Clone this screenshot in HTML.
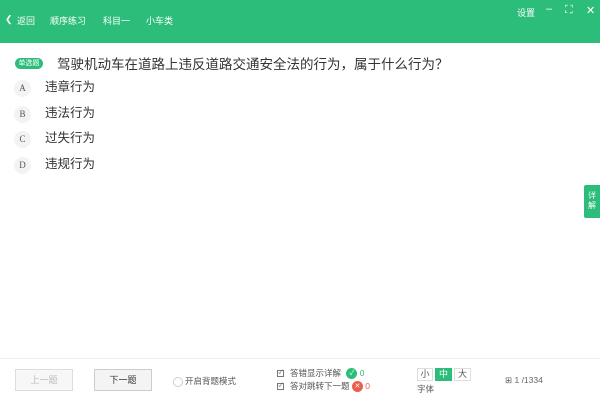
<!DOCTYPE html>
<html><head><meta charset="utf-8"><style>
*{margin:0;padding:0;box-sizing:border-box}
body{width:600px;height:400px;background:#fff;font-family:"Liberation Sans","Noto Sans CJK SC",sans-serif;position:relative;overflow:hidden;color:#333}
.hd{position:absolute;left:0;top:0;width:600px;height:43px;background:#2dbd7a;color:#fff;font-size:9px}
.hd span{position:absolute;top:14px}
.q{position:absolute;left:15px;top:53px;font-size:13.5px;color:#333;white-space:nowrap}
.tag{position:absolute;left:15px;top:58px;width:28px;height:11px;background:#2dbd7a;border-radius:6px;color:#fff;font-size:7px;text-align:center;line-height:11px}
.opt{position:absolute;left:14px;font-size:12.5px;color:#333}
.opt i{position:absolute;left:0;top:0;width:17px;height:17px;border-radius:50%;background:#f3f3f3;font-style:normal;font-size:9px;text-align:center;line-height:17px;color:#555;font-family:"Liberation Serif",serif}
.opt b{position:absolute;left:31px;top:-1px;font-weight:normal;white-space:nowrap;line-height:17px}
.ft{position:absolute;left:0;top:358px;width:600px;height:42px;border-top:1px solid #eee;background:#fff}
.btn{position:absolute;top:369px;height:22px;width:58px;border:1px solid #ccc;background:#f4f4f4;font-size:9px;text-align:center;line-height:20px}
.sm{position:absolute;font-size:8.5px;color:#555;white-space:nowrap}
.cb{display:inline-block;width:7px;height:7px;border:1px solid #777;vertical-align:middle;margin-right:6px;font-size:6px;line-height:5px;text-align:center}
</style></head><body>
<div class="hd">
<span style="left:5px">&#10094;</span><span style="left:17px">返回</span>
<span style="left:50px">顺序练习</span><span style="left:103px">科目一</span><span style="left:146px">小车类</span>
<span style="left:517px;top:6px">设置</span><span style="left:546px;top:3px;font-size:11px">–</span>
<span style="left:565px;top:4px;font-size:11px">⛶</span><span style="left:586px;top:4px;font-size:11px">✕</span>
</div>
<div class="tag">单选题</div>
<div class="q" style="left:57px">驾驶机动车在道路上违反道路交通安全法的行为，属于什么行为？</div>
<div class="opt" style="top:80px"><i>A</i><b>违章行为</b></div>
<div class="opt" style="top:106px"><i>B</i><b>违法行为</b></div>
<div class="opt" style="top:131px"><i>C</i><b>过失行为</b></div>
<div class="opt" style="top:157px"><i>D</i><b>违规行为</b></div>
<div style="position:absolute;left:584px;top:185px;width:16px;height:33px;background:#2dbd7a;color:#fff;font-size:8px;text-align:center;line-height:10px;padding-top:6px;border-radius:2px 0 0 2px">详<br>解</div>
<div class="ft"></div>
<div class="btn" style="left:15px;color:#bbb;border-color:#ddd;background:#f7f7f7">上一题</div>
<div class="btn" style="left:94px;color:#333">下一题</div>
<div class="sm" style="left:173px;top:375px"><span style="display:inline-block;width:10px;height:10px;border:1px solid #ccc;border-radius:50%;vertical-align:middle;margin-right:2px"></span>开启背题模式</div>
<div class="sm" style="left:277px;top:367px"><span class="cb">✓</span>答错显示详解 <span style="display:inline-block;width:11px;height:11px;border-radius:50%;background:#2dbd7a;color:#fff;font-size:7px;text-align:center;line-height:11px;margin-left:3px;vertical-align:middle">✓</span> <span style="color:#2dbd7a">0</span></div>
<div class="sm" style="left:277px;top:380px"><span class="cb">✓</span>答对跳转下一题 <span style="display:inline-block;width:11px;height:11px;border-radius:50%;background:#e8604c;color:#fff;font-size:7px;text-align:center;line-height:11px;margin-left:0px;vertical-align:middle">✕</span> <span style="color:#e8604c">0</span></div>
<div class="sm" style="left:417px;top:368px;font-size:9px">
<span style="display:inline-block;width:16px;height:13px;border:1px solid #ddd;text-align:center;line-height:11px">小</span><span style="display:inline-block;width:17px;height:13px;background:#2dbd7a;color:#fff;text-align:center;line-height:13px;margin-left:2px">中</span><span style="display:inline-block;width:17px;height:13px;border:1px solid #ddd;text-align:center;line-height:11px;margin-left:2px">大</span></div>
<div class="sm" style="left:417px;top:383px">字体</div>
<div class="sm" style="left:505px;top:375px;color:#666">⊞ 1 /1334</div>
</body></html>
